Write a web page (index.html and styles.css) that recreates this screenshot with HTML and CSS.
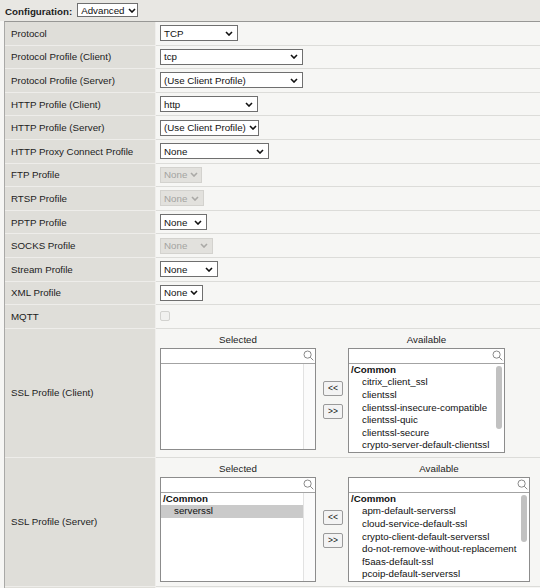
FILE: index.html
```html
<!DOCTYPE html>
<html>
<head>
<meta charset="utf-8">
<link rel="stylesheet" href="styles.css">
</head>
<body>
<div class="hdr">
  <span class="hlbl">Configuration:</span>
  <span class="sel adv">Advanced<svg class="chev" viewBox="0 0 8 5"><path d="M1 1L4 4L7 1"/></svg></span>
</div>
<div class="tbl">
  <div class="row"><div class="lbl">Protocol</div><div class="val"><span class="sel w78">TCP<svg class="chev" viewBox="0 0 8 5"><path d="M1 1L4 4L7 1"/></svg></span></div></div>
  <div class="row"><div class="lbl">Protocol Profile (Client)</div><div class="val"><span class="sel w143">tcp<svg class="chev" viewBox="0 0 8 5"><path d="M1 1L4 4L7 1"/></svg></span></div></div>
  <div class="row"><div class="lbl">Protocol Profile (Server)</div><div class="val"><span class="sel w143">(Use Client Profile)<svg class="chev" viewBox="0 0 8 5"><path d="M1 1L4 4L7 1"/></svg></span></div></div>
  <div class="row"><div class="lbl">HTTP Profile (Client)</div><div class="val"><span class="sel w98">http<svg class="chev" viewBox="0 0 8 5"><path d="M1 1L4 4L7 1"/></svg></span></div></div>
  <div class="row"><div class="lbl">HTTP Profile (Server)</div><div class="val"><span class="sel w99">(Use Client Profile)<svg class="chev" viewBox="0 0 8 5"><path d="M1 1L4 4L7 1"/></svg></span></div></div>
  <div class="row"><div class="lbl">HTTP Proxy Connect Profile</div><div class="val"><span class="sel w109">None<svg class="chev" viewBox="0 0 8 5"><path d="M1 1L4 4L7 1"/></svg></span></div></div>
  <div class="row"><div class="lbl">FTP Profile</div><div class="val"><span class="sel dis w42">None<svg class="chev" viewBox="0 0 8 5"><path d="M1 1L4 4L7 1"/></svg></span></div></div>
  <div class="row"><div class="lbl">RTSP Profile</div><div class="val"><span class="sel dis w44">None<svg class="chev" viewBox="0 0 8 5"><path d="M1 1L4 4L7 1"/></svg></span></div></div>
  <div class="row"><div class="lbl">PPTP Profile</div><div class="val"><span class="sel w47">None<svg class="chev" viewBox="0 0 8 5"><path d="M1 1L4 4L7 1"/></svg></span></div></div>
  <div class="row"><div class="lbl">SOCKS Profile</div><div class="val"><span class="sel dis w53">None<svg class="chev" viewBox="0 0 8 5"><path d="M1 1L4 4L7 1"/></svg></span></div></div>
  <div class="row"><div class="lbl">Stream Profile</div><div class="val"><span class="sel w58">None<svg class="chev" viewBox="0 0 8 5"><path d="M1 1L4 4L7 1"/></svg></span></div></div>
  <div class="row"><div class="lbl">XML Profile</div><div class="val"><span class="sel w43">None<svg class="chev" viewBox="0 0 8 5"><path d="M1 1L4 4L7 1"/></svg></span></div></div>
  <div class="row"><div class="lbl">MQTT</div><div class="val"><span class="chk"></span></div></div>

  <div class="row tall"><div class="lbl">SSL Profile (Client)</div>
    <div class="val dual">
      <div class="pick">
        <div class="cap">Selected</div>
        <div class="box w156">
          <div class="search"><svg class="mag" viewBox="0 0 11 11"><circle cx="4.6" cy="4.6" r="3.6"/><path d="M7.2 7.2L10.3 10.3"/></svg></div>
          <div class="list h85">
            <div class="items"></div>
            <div class="track"></div>
          </div>
        </div>
      </div>
      <div class="mv"><span class="btn">&lt;&lt;</span><span class="btn">&gt;&gt;</span></div>
      <div class="pick">
        <div class="cap">Available</div>
        <div class="box w157">
          <div class="search"><svg class="mag" viewBox="0 0 11 11"><circle cx="4.6" cy="4.6" r="3.6"/><path d="M7.2 7.2L10.3 10.3"/></svg></div>
          <div class="list h88">
            <div class="items">
              <div class="grp">/Common</div>
              <div class="it">citrix_client_ssl</div>
              <div class="it">clientssl</div>
              <div class="it">clientssl-insecure-compatible</div>
              <div class="it">clientssl-quic</div>
              <div class="it">clientssl-secure</div>
              <div class="it">crypto-server-default-clientssl</div>
            </div>
            <div class="ovl"><div class="thumb t63"></div></div>
          </div>
        </div>
      </div>
    </div>
  </div>

  <div class="row tall"><div class="lbl">SSL Profile (Server)</div>
    <div class="val dual">
      <div class="pick">
        <div class="cap">Selected</div>
        <div class="box w156">
          <div class="search"><svg class="mag" viewBox="0 0 11 11"><circle cx="4.6" cy="4.6" r="3.6"/><path d="M7.2 7.2L10.3 10.3"/></svg></div>
          <div class="list h88">
            <div class="items">
              <div class="grp">/Common</div>
              <div class="it on">serverssl</div>
            </div>
            <div class="track"></div>
          </div>
        </div>
      </div>
      <div class="mv"><span class="btn">&lt;&lt;</span><span class="btn">&gt;&gt;</span></div>
      <div class="pick">
        <div class="cap">Available</div>
        <div class="box w182">
          <div class="search"><svg class="mag" viewBox="0 0 11 11"><circle cx="4.6" cy="4.6" r="3.6"/><path d="M7.2 7.2L10.3 10.3"/></svg></div>
          <div class="list h88">
            <div class="items">
              <div class="grp">/Common</div>
              <div class="it">apm-default-serverssl</div>
              <div class="it">cloud-service-default-ssl</div>
              <div class="it">crypto-client-default-serverssl</div>
              <div class="it">do-not-remove-without-replacement</div>
              <div class="it">f5aas-default-ssl</div>
              <div class="it">pcoip-default-serverssl</div>
            </div>
            <div class="ovl"><div class="thumb t47"></div></div>
          </div>
        </div>
      </div>
    </div>
  </div>
  <div class="row"><div class="lbl"></div><div class="val"></div></div>
</div>
</body>
</html>
```
FILE: styles.css
```css
html, body {
  margin: 0;
  padding: 0;
}
body {
  width: 540px;
  height: 588px;
  overflow: hidden;
  background: #f6f6f4;
  font-family: "Liberation Sans", Arial, sans-serif;
  font-size: 9.75px;
  color: #1c1c1c;
}
.hdr {
  height: 21px;
  background: #e8e7e3;
  display: flex;
  align-items: flex-start;
  padding-left: 5px;
  box-sizing: border-box;
}
.hlbl {
  font-weight: bold;
  line-height: 12px;
  padding-top: 6px;
  margin-right: 5px;
}
.sel {
  display: inline-flex;
  align-items: center;
  justify-content: space-between;
  box-sizing: border-box;
  height: 16px;
  border: 1px solid #6f6f6f;
  background: #fff;
  padding: 0 4px 0 3px;
  color: #111;
  white-space: nowrap;
}
.sel.adv {
  height: 14px;
  width: 61px;
  margin-top: 3px;
  padding-left: 3px;
}
.chev {
  width: 8px;
  height: 5px;
  flex: none;
  margin-left: 3px;
}
.chev path {
  fill: none;
  stroke: #111;
  stroke-width: 1.6;
}
.sel.dis {
  background: #e2e1dd;
  border-color: #d3d2ce;
  color: #a3a3a0;
}
.sel.dis .chev path {
  stroke: #aaa9a6;
}
.w78 { width: 78px; }
.w143 { width: 143px; }
.w98 { width: 98px; }
.w99 { width: 99px; }
.w109 { width: 109px; }
.w42 { width: 42px; }
.w44 { width: 44px; }
.w47 { width: 47px; }
.w53 { width: 53px; }
.w58 { width: 58px; }
.w43 { width: 43px; }

.tbl {
  margin-left: 4px;
  border-left: 1px solid #a9a9a7;
  border-top: 1px solid #979795;
}
.row {
  display: flex;
  height: 23.6px;
}
.row.tall {
  height: auto;
}
.lbl {
  width: 151px;
  flex: none;
  box-sizing: border-box;
  background: #dfded9;
  border-right: 1px solid #efeeec;
  border-bottom: 1px solid #eeedea;
  padding-left: 6px;
  display: flex;
  align-items: center;
}
.val {
  flex: 1;
  min-width: 0;
  box-sizing: border-box;
  border-bottom: 1px solid #dcdcd9;
  padding-left: 4px;
  display: flex;
  align-items: center;
}
.chk {
  width: 10px;
  height: 10px;
  box-sizing: border-box;
  border: 1px solid #d2d2cf;
  border-radius: 2px;
  background: #f1f1ef;
}
.val.dual {
  align-items: stretch;
  padding: 4px 0 4px 4px;
}
.pick {
  display: flex;
  flex-direction: column;
  flex: none;
}
.cap {
  text-align: center;
  height: 13px;
  line-height: 13px;
  margin-bottom: 2px;
}
.box {
  box-sizing: border-box;
  border: 1px solid #8c8c8c;
  background: #fff;
}
.w156 { width: 156px; }
.w157 { width: 157px; }
.w182 { width: 182px; }
.search {
  height: 15px;
  box-sizing: border-box;
  border-bottom: 1px solid #a3a3a3;
  display: flex;
  justify-content: flex-end;
  align-items: center;
  padding-right: 1px;
}
.mag {
  width: 11px;
  height: 11px;
}
.mag circle, .mag path {
  fill: none;
  stroke: #8a8a8a;
  stroke-width: 1;
}
.list {
  display: flex;
  overflow: hidden;
}
.h85 { height: 85px; }
.h88 { height: 88px; }
.items {
  flex: 1;
  overflow: hidden;
  line-height: 12.6px;
  white-space: nowrap;
  color: #111;
}
.grp {
  font-weight: bold;
  padding-left: 2px;
}
.it {
  padding-left: 13px;
}
.it.on {
  background: #cacaca;
}
.track {
  width: 12px;
  flex: none;
  box-sizing: border-box;
  border-left: 1px solid #e2e2e2;
  background: #fbfbfb;
}
.ovl {
  width: 11px;
  flex: none;
  display: flex;
  justify-content: center;
  padding-top: 2px;
  box-sizing: border-box;
}
.thumb {
  width: 6px;
  border-radius: 3px;
  background: #c1c1c1;
}
.t63 { height: 63px; }
.t47 { height: 47px; }
.mv {
  margin: 15px 5px 0 7px;
  display: flex;
  flex-direction: column;
  justify-content: center;
  gap: 8px;
  flex: none;
}
.btn {
  display: block;
  width: 20px;
  height: 15px;
  box-sizing: border-box;
  border: 1px solid #9a9a9a;
  border-radius: 2px;
  background: #f3f3f3;
  font-size: 8.5px;
  line-height: 13px;
  text-align: center;
  color: #111;
}
```
